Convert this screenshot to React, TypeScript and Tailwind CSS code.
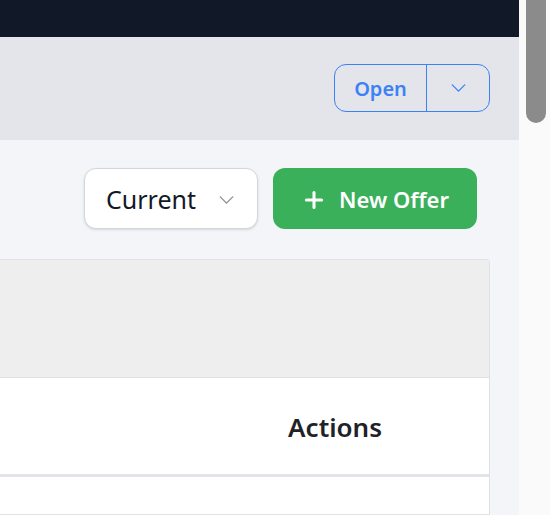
import { Plus } from 'lucide-react';

function Chevron({ className }: { className?: string }) {
  return (
    <svg viewBox="0 0 16 9" fill="none" className={className}>
      <path d="M1 1l7 7 7-7" stroke="currentColor" strokeWidth="1.5" strokeLinecap="round" strokeLinejoin="round" />
    </svg>
  );
}

export default function App() {
  return (
    <div className="flex h-[515px] w-[550px] overflow-hidden font-['Noto_Sans',sans-serif]">
      <div className="flex min-w-0 flex-1 flex-col bg-[#f4f5f9]">
        <div className="h-[37px] shrink-0 bg-[#111827]" />

        <div className="flex h-[103px] shrink-0 items-start justify-end bg-[#e4e5ea] pt-[27px] pr-[29px]">
          <div className="flex h-[48px] w-[156px] overflow-hidden rounded-[12px] border border-[#3b82f6]">
            <button className="flex flex-1 items-center justify-center pt-[2px] text-[20px] font-semibold text-[#3b82f6]">
              Open
            </button>
            <div className="w-px bg-[#3b82f6]" />
            <button className="flex w-[62px] items-center justify-center text-[#3b82f6]">
              <Chevron className="h-[8px] w-[15px]" />
            </button>
          </div>
        </div>

        <div className="flex shrink-0 justify-end gap-[15px] pt-[28px] pr-[42px]">
          <button className="flex h-[61px] w-[174px] items-center justify-between rounded-[12px] border border-[#d4d6dc] bg-white pt-[3px] pr-[23px] pl-[21px] text-[25px] text-[#111827] shadow-sm">
            Current
            <Chevron className="h-[8px] w-[15px] text-[#8a8d94]" />
          </button>
          <button className="flex h-[61px] w-[204px] items-center justify-center gap-[12px] rounded-[12px] bg-[#3bb05a] pt-[2px] text-[22px] font-semibold text-white">
            <Plus className="size-[26px]" strokeWidth={2.8} />
            New Offer
          </button>
        </div>

        <div className="mt-[30px] mr-[29px] -ml-4 flex flex-1 flex-col overflow-hidden rounded-tr-[3px] border border-[#dfe1e7] bg-white">
          <div className="h-[118px] shrink-0 border-b border-[#e0e0e0] bg-[#eeeeee]" />
          <div className="flex h-[99px] shrink-0 items-center justify-end border-b-[3px] border-[#e2e4ea] pt-[3px] pr-[107px]">
            <span className="text-[26px] font-semibold text-[#1f2328]">Actions</span>
          </div>
          <div className="flex-1 bg-white" />
        </div>
      </div>

      <div className="w-[31px] shrink-0 bg-[#fafafa]">
        <div className="ml-[7px] h-[123px] w-[20px] rounded-b-full bg-[#8b8b8b]" />
      </div>
    </div>
  );
}
